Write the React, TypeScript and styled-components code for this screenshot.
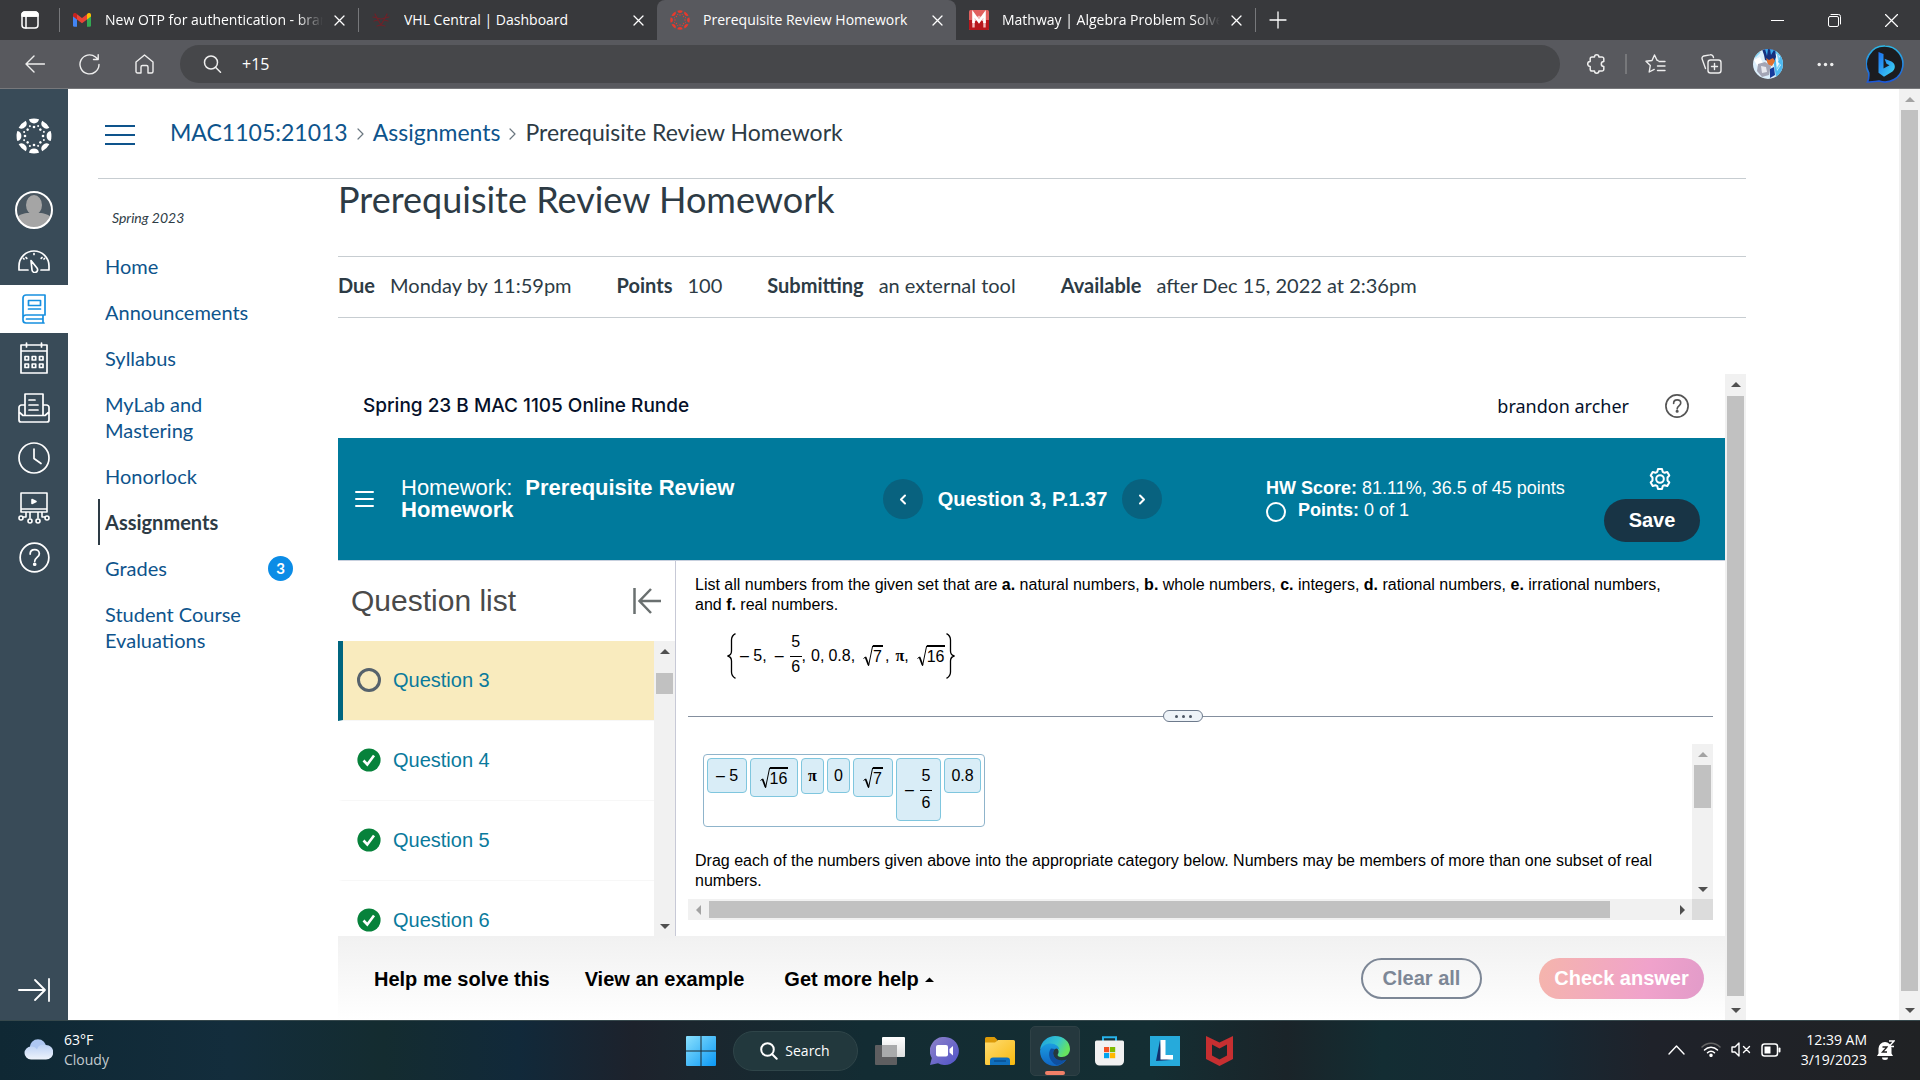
import React from 'react';
import styled, { createGlobalStyle, css } from 'styled-components';

const arial = '"Liberation Sans", Arial, sans-serif';
const segoe = '"Open Sans", "Segoe UI", sans-serif';
const lato = 'Lato, "Open Sans", sans-serif';

const GlobalStyle = createGlobalStyle`
  *, *::before, *::after { box-sizing: border-box; }
  body { margin: 0; background: #fff; font-family: ${lato}; color: #2d3b45; }
  button, input { font: inherit; color: inherit; }
  button { background: none; border: 0; padding: 0; cursor: pointer; }
  a { color: inherit; text-decoration: none; }
  h1, h2, p, ul, ol, dl, dd { margin: 0; padding: 0; font-weight: inherit; }
  ul, ol { list-style: none; }
  svg { display: block; flex: none; }
`;

const Screen = styled.div`
  display: flex;
  flex-direction: column;
  height: 100vh;
  overflow: hidden;
`;

/* ---------- Browser chrome ---------- */

const TabStrip = styled.div`
  display: flex;
  height: 40px;
  background: #38393c;
  color: #fff;
  font: 14px/20px ${segoe};
  flex: none;
`;
const IconCell = styled.button<{ $w: number }>`
  width: ${p => p.$w}px;
  display: flex;
  align-items: center;
  justify-content: center;
  flex: none;
`;
const Tab = styled.div<{ $active?: boolean; $line?: boolean }>`
  width: 299px;
  display: flex;
  align-items: center;
  padding: 0 11px 0 13px;
  position: relative;
  ${p => p.$active && css`
    background: #58595e;
    border-radius: 8px 8px 0 0;
  `}
  ${p => p.$line && css`
    &::before {
      content: '';
      position: absolute;
      left: 0;
      top: 8px;
      height: 24px;
      width: 1px;
      background: #77787b;
    }
  `}
`;
const Favicon = styled.span`
  width: 20px;
  margin-right: 13px;
  display: flex;
  justify-content: center;
  flex: none;
`;
const TabTitle = styled.span<{ $fade?: boolean }>`
  flex: 1;
  min-width: 0;
  margin-right: 8px;
  white-space: nowrap;
  overflow: hidden;
  ${p => p.$fade && css`mask-image: linear-gradient(to right, #000 88%, transparent);`}
`;
const Spacer = styled.div`flex: 1;`;
const NewTab = styled(IconCell)`
  position: relative;
  &::before {
    content: '';
    position: absolute;
    left: 0;
    top: 8px;
    height: 24px;
    width: 1px;
    background: #77787b;
  }
`;

const Toolbar = styled.div`
  display: flex;
  align-items: center;
  height: 49px;
  background: #58595e;
  border-bottom: 1px solid #77787b;
  color: #eee;
  padding: 0 4px 0 7px;
  flex: none;
`;
const AddressBar = styled.label`
  flex: 1;
  height: 38px;
  border-radius: 19px;
  background: #46474a;
  display: flex;
  align-items: center;
  padding-left: 23px;
  gap: 20px;
  margin: 0 8px;
`;
const AddressInput = styled.input`
  flex: 1;
  border: 0;
  outline: 0;
  padding: 0;
  background: transparent;
  color: #fff;
  font: 16px/24px ${segoe};
`;
const ToolSeparator = styled.span`
  width: 2px;
  height: 20px;
  background: #77787b;
`;

/* ---------- Scrollbars ---------- */

const Track = styled.div<{ $horizontal?: boolean }>`
  display: flex;
  flex: none;
  background: #f1f1f1;
  flex-direction: ${p => (p.$horizontal ? 'row' : 'column')};
  ${p => (p.$horizontal ? 'height: 21px;' : 'width: 21px;')}
  align-items: stretch;
`;
const ArrowCell = styled.span`
  width: 21px;
  height: 21px;
  display: flex;
  align-items: center;
  justify-content: center;
  flex: none;
`;
const Part = styled.span<{ $grow: number; $thumb?: boolean; $horizontal?: boolean }>`
  flex: ${p => p.$grow} 1 0;
  margin: ${p => (p.$horizontal ? '2px 0' : '0 2px')};
  background: ${p => (p.$thumb ? '#c1c1c1' : 'transparent')};
`;

function Arrow({ dir, dim }: { dir: 'up' | 'down' | 'left' | 'right'; dim?: boolean }) {
  const d = { up: 'M0 7 5 2l5 5z', down: 'M0 3l5 5 5-5z', left: 'M7 0 2 5l5 5z', right: 'M3 0l5 5-5 5z' }[dir];
  return (
    <ArrowCell>
      <svg width="10" height="10"><path d={d} fill={dim ? '#a3a3a3' : '#505050'} /></svg>
    </ArrowCell>
  );
}
function Scrollbar({ parts, horizontal, atStart }: { parts: [number, number, number]; horizontal?: boolean; atStart?: boolean }) {
  return (
    <Track $horizontal={horizontal} aria-hidden="true">
      <Arrow dir={horizontal ? 'left' : 'up'} dim={atStart} />
      <Part $grow={parts[0]} $horizontal={horizontal} />
      <Part $grow={parts[1]} $horizontal={horizontal} $thumb />
      <Part $grow={parts[2]} $horizontal={horizontal} />
      <Arrow dir={horizontal ? 'right' : 'down'} />
    </Track>
  );
}

/* ---------- Canvas page ---------- */

const Viewport = styled.div`
  display: flex;
  flex: 1;
  min-height: 0;
`;
const GlobalNav = styled.nav`
  width: 68px;
  flex: none;
  background: #394b58;
  color: #fff;
  display: flex;
  flex-direction: column;
`;
const NavItem = styled.a<{ $h: number; $active?: boolean }>`
  height: ${p => p.$h}px;
  display: flex;
  align-items: center;
  justify-content: center;
  ${p => p.$active && css`
    background: #fff;
    color: #1790e0;
  `}
`;
const Page = styled.div`
  flex: 1;
  min-width: 0;
  display: flex;
  flex-direction: column;
  padding: 0 153px 0 30px;
`;
const CrumbBar = styled.header`
  display: flex;
  align-items: center;
  height: 90px;
  border-bottom: 1px solid #c7cdd1;
  padding: 2px 0 0 7px;
  gap: 35px;
  flex: none;
`;
const Crumbs = styled.ol`
  display: flex;
  align-items: center;
  gap: 9px;
  font-size: 23px;
  line-height: 30px;
  li { display: flex; align-items: center; gap: 9px; padding-bottom: 6px; }
  a { color: #0e548c; }
  svg { color: #6b7780; margin-top: 4px; }
`;
const Columns = styled.div`
  display: flex;
  flex: 1;
  min-height: 0;
`;
const CourseNav = styled.nav`
  width: 240px;
  flex: none;
`;
const Term = styled.p`
  font-size: 14px;
  line-height: 20px;
  font-style: italic;
  padding: 29px 0 15px 14px;
`;
const CourseLink = styled.a<{ $active?: boolean }>`
  display: flex;
  align-items: center;
  justify-content: space-between;
  width: 195px;
  padding: 10px 0 10px 5px;
  border-left: 2px solid ${p => (p.$active ? '#2d3b45' : 'transparent')};
  font-size: 20px;
  line-height: 26px;
  color: ${p => (p.$active ? '#2d3b45' : '#0e548c')};
  font-weight: ${p => (p.$active ? 700 : 400)};
`;
const LinkText = styled.span`max-width: 150px;`;
const Badge = styled.span`
  width: 25px;
  height: 25px;
  border-radius: 50%;
  background: #0b8ce6;
  color: #fff;
  font-size: 15px;
  font-weight: 700;
  line-height: 24px;
  text-align: center;
`;
const Main = styled.main`
  flex: 1;
  min-width: 0;
  display: flex;
  flex-direction: column;
`;
const Title = styled.h1`
  font-size: 36px;
  line-height: 40px;
  padding-bottom: 37px;
  border-bottom: 1px solid #c7cdd1;
`;
const Details = styled.dl`
  display: flex;
  gap: 45px;
  padding: 13px 0 17px;
  border-bottom: 1px solid #c7cdd1;
  font-size: 20px;
  line-height: 30px;
  margin-bottom: 56px;
  div { display: flex; gap: 15px; }
  dt { font-weight: 700; }
`;

/* ---------- Homework frame ---------- */

const Frame = styled.section`
  display: flex;
  flex: 1;
  min-height: 0;
  font-family: ${arial};
  color: #000;
`;
const FrameBody = styled.div`
  flex: 1;
  min-width: 0;
  display: flex;
  flex-direction: column;
`;
const FrameHeader = styled.header`
  display: flex;
  align-items: center;
  height: 64px;
  padding: 0 36px 0 25px;
  color: #05112a;
  font: 18px/24px "Noto Sans", sans-serif;
  flex: none;
`;
const CourseName = styled.span`
  font: 500 19px/24px Inter, sans-serif;
  flex: 1;
`;
const HelpButton = styled.button`
  margin-left: 36px;
  color: #555;
`;
const BlueBar = styled.div`
  display: grid;
  grid-template-columns: 63px 482px 383px 291px 1fr;
  align-items: center;
  height: 123px;
  background: #007a9c;
  border-bottom: 1px solid #c7d0de;
  color: #fff;
  flex: none;
`;
const MenuButton = styled.button`
  padding-left: 17px;
  justify-self: start;
`;
const HomeworkName = styled.h2`
  font-size: 22px;
  line-height: 22px;
  width: 350px;
  b { margin-left: 7px; }
`;
const Stepper = styled.div`
  display: flex;
  align-items: center;
  justify-content: space-between;
  width: 279px;
  font-size: 20px;
  font-weight: 700;
`;
const RoundButton = styled.button`
  width: 40px;
  height: 40px;
  border-radius: 50%;
  background: #08627f;
  display: flex;
  align-items: center;
  justify-content: center;
`;
const Score = styled.div`
  font-size: 18px;
  line-height: 22px;
  white-space: nowrap;
`;
const PointsRow = styled.div`
  display: flex;
  gap: 12px;
  svg { margin-top: 3px; }
`;
const SaveColumn = styled.div`
  display: flex;
  flex-direction: column;
  align-items: flex-end;
  padding-right: 25px;
  gap: 9px;
  padding-top: 11px;
`;
const GearButton = styled.button`padding-right: 29px;`;
const SaveButton = styled.button`
  width: 96px;
  height: 43px;
  border-radius: 22px;
  background: #183445;
  font-size: 20px;
  font-weight: 700;
`;
const Workspace = styled.div`
  display: flex;
  flex: 1;
  min-height: 0;
`;
const QuestionPane = styled.aside`
  width: 338px;
  flex: none;
  display: flex;
  flex-direction: column;
  border-right: 1px solid #c7c9d6;
`;
const PaneHeader = styled.div`
  display: flex;
  align-items: center;
  justify-content: space-between;
  height: 80px;
  padding: 0 14px 0 13px;
  color: #4a4a4a;
  flex: none;
  h2 { font-size: 30px; }
`;
const ListArea = styled.div`
  display: flex;
  flex: 1;
  min-height: 0;
`;
const QuestionList = styled.ul`
  flex: 1;
  overflow: hidden;
`;
const QuestionRow = styled.li<{ $active?: boolean }>`
  height: 80px;
  border-left: 5px solid ${p => (p.$active ? '#00657f' : 'transparent')};
  background: ${p => (p.$active ? '#f9ebbe' : '#fff')};
  border-bottom: 1px solid #f7f7f7;
  a {
    display: flex;
    align-items: center;
    gap: 12px;
    height: 78px;
    padding-left: 14px;
    color: #0a7a9c;
    font-size: 20px;
  }
`;
const Problem = styled.div`
  flex: 1;
  min-width: 0;
  display: flex;
  flex-direction: column;
  padding: 14px 12px 16px;
  font-size: 16px;
  line-height: 20px;
`;
const ProblemText = styled.p`padding: 0 28px 0 7px;`;
const SetRow = styled.div`
  display: flex;
  align-items: center;
  height: 46px;
  margin: 18px 0 0 39px;
`;
const Elements = styled.div`
  display: flex;
  align-items: center;
  padding: 0 1px 0 4px;
`;
const Entry = styled.span<{ $gap: number }>`
  display: flex;
  align-items: center;
  margin-left: ${p => p.$gap}px;
  font-size: 16px;
  line-height: 20px;
`;
const FractionBox = styled.span<{ $roomy?: boolean }>`
  display: inline-flex;
  flex-direction: column;
  align-items: center;
  margin-left: 6px;
  span { width: 12px; height: 28px; line-height: 28px; text-align: center; }
  span + span { border-top: 1px solid #000; line-height: ${p => (p.$roomy ? 24 : 20)}px; }
`;
const RootBox = styled.span`
  display: inline-flex;
  align-items: flex-start;
  span { border-top: 2px solid #000; line-height: 20px; padding-right: 1px; }
`;
const Pi = styled.span`font-family: "Liberation Serif", serif; font-weight: 700;`;
const Divider = styled.div`
  display: flex;
  align-items: center;
  height: 12px;
  margin-top: 31px;
  &::before { content: ''; height: 1px; background: #848f9e; flex: 475; }
  &::after { content: ''; height: 1px; background: #848f9e; flex: 510; }
`;
const Grip = styled.button`
  width: 40px;
  height: 12px;
  border: 1px solid #6d7a8c;
  border-radius: 6px;
  background: #eef3f8;
  display: flex;
  align-items: center;
  justify-content: center;
  gap: 4px;
  i { width: 3px; height: 3px; border-radius: 50%; background: #4b5563; }
`;
const AnswerArea = styled.div`
  display: grid;
  grid-template-columns: 1fr 21px;
  grid-template-rows: 1fr 21px;
  flex: 1;
  min-height: 0;
  margin-top: 22px;
`;
const AnswerContent = styled.div`
  overflow: hidden;
  padding: 10px 0 0 7px;
`;
const Corner = styled.div`background: #dcdcdc;`;
const Tray = styled.div`
  display: flex;
  align-items: flex-start;
  gap: 3px;
  width: fit-content;
  margin: 0 0 24px 8px;
  padding: 3px;
  height: 73px;
  border: 1px solid #8fb4cb;
  border-radius: 4px;
`;
const Tile = styled.button<{ $w: number; $h: number }>`
  width: ${p => p.$w}px;
  height: ${p => p.$h}px;
  border: 1px solid #7fc6de;
  border-radius: 4px;
  background: #d9edf7;
  display: flex;
  align-items: center;
  justify-content: center;
`;
const FrameFooter = styled.footer`
  display: flex;
  align-items: center;
  height: 84px;
  padding: 0 21px 0 36px;
  gap: 35px;
  background: linear-gradient(#f1f1f1, #fff);
  font-size: 20px;
  font-weight: 700;
  flex: none;
`;
const HelpLink = styled.button<{ $wide?: boolean }>`
  font-weight: 700;
  display: flex;
  align-items: center;
  gap: 6px;
  padding-top: 3px;
  margin-left: ${p => (p.$wide ? 5 : 0)}px;
`;
const ClearButton = styled.button`
  width: 121px;
  height: 41px;
  border: 2px solid #7d8796;
  border-radius: 21px;
  color: #7d8796;
  font-weight: 700;
  margin-right: 22px;
`;
const CheckButton = styled.button`
  width: 165px;
  height: 41px;
  border-radius: 21px;
  background: linear-gradient(100deg, #f5b5ac, #f0a2cb 65%, #e29bc9);
  color: #fff;
  font-weight: 700;
`;

/* ---------- Windows taskbar ---------- */

const Taskbar = styled.footer`
  display: grid;
  grid-template-columns: 1fr auto 1fr;
  align-items: center;
  height: 60px;
  flex: none;
  border-top: 1px solid #36484c;
  background: linear-gradient(90deg, #0f2834, #132d3c 12%, #142c30 20%, #11293a 27%, #1d222c 33%, #1b262e 36%, #132c33 45%, #142e33 60%, #1a2429 67%, #132d33 72%, #162934 80%, #1f222a 86%, #202224);
  color: #fff;
  font: 14px/20px ${segoe};
`;
const Weather = styled.button`
  display: flex;
  align-items: center;
  gap: 11px;
  padding: 0 0 2px 24px;
  text-align: left;
  justify-self: start;
  span span { display: block; color: #c3cace; }
`;
const AppRow = styled.div`
  display: flex;
  align-items: center;
  gap: 5px;
`;
const AppButton = styled.button<{ $running?: boolean }>`
  width: 50px;
  height: 50px;
  border-radius: 5px;
  display: flex;
  align-items: center;
  justify-content: center;
  position: relative;
  ${p => p.$running && css`
    background: #25383e;
    border: 1px solid #2f4146;
    &::after {
      content: '';
      position: absolute;
      bottom: 0;
      left: 14px;
      width: 20px;
      height: 4px;
      border-radius: 2px;
      background: #f08068;
    }
  `}
`;
const SearchPill = styled.button`
  width: 125px;
  height: 40px;
  border-radius: 20px;
  border: 1px solid #2f4549;
  background: #22383d;
  display: flex;
  align-items: center;
  justify-content: center;
  gap: 7px;
  margin: 0 2px;
`;
const TrayArea = styled.div`
  display: flex;
  align-items: center;
  justify-content: flex-end;
  padding: 0 25px 2px 0;
  gap: 10px;
`;
const ShowHidden = styled.button`margin-right: 6px;`;
const Clock = styled.div`
  text-align: right;
  margin-left: 10px;
`;

/* ---------- Icons ---------- */

const line = { fill: 'none', stroke: 'currentColor', strokeLinecap: 'round', strokeLinejoin: 'round' } as const;

function CanvasMark({ size, color }: { size: number; color: string }) {
  return (
    <svg width={size} height={size} viewBox="-18 -18 36 36" fill={color}>
      {[0, 45, 90, 135, 180, 225, 270, 315].map(a => (
        <g key={a} transform={`rotate(${a})`}>
          <path d="M-5 -16.7a17.5 17.5 0 0 1 10 0a5.1 5.1 0 0 1-10 0z" />
          <circle cx="0" cy="-9" r="1.3" />
          <circle cx="4.1" cy="-9.9" r="1" />
        </g>
      ))}
    </svg>
  );
}
const CloseX = () => (
  <svg width="11" height="11" viewBox="0 0 11 11" {...line} strokeWidth="1.3"><path d="M1 1l9 9M10 1l-9 9" /></svg>
);
const GmailIcon = () => (
  <svg width="18" height="14" viewBox="0 0 18 14">
    <path d="M0 2v10.500a1.300 1.300 0 0 0 1.300 1.300H4V6z" fill="#4285f4" />
    <path d="M18 2v10.500a1.300 1.300 0 0 1-1.300 1.300H14V6z" fill="#34a853" />
    <path d="M14 1.200V6.500l4-3V1.900C18 .1 16-.6 14.600.5z" fill="#fbbc04" />
    <path d="M0 3.500l4 3V1.200L3.400.5C2-.6 0 .1 0 1.900z" fill="#c5221f" />
    <path d="M4 1.200l5 3.800 5-3.800v5.300L9 10.300 4 6.500z" fill="#ea4335" />
  </svg>
);
const VhlIcon = () => (
  <svg width="18" height="14" viewBox="0 0 18 14" {...line} stroke="#6e2229" strokeWidth="1.200">
    <path d="M1 4l4 1 4 1 4-1 4-1M5 5l4 7 4-7M2 8l4-1M16 8l-4-1M5 5L3 1M13 5l2-4M9 12l-4 1M9 12l4 1" />
  </svg>
);
const MathwayIcon = () => (
  <svg width="20" height="20" viewBox="0 0 20 20">
    <rect width="20" height="20" rx="1.500" fill="#e0605f" />
    <path d="M0 10h20v8.500a1.500 1.500 0 0 1-1.500 1.500h-17A1.500 1.500 0 0 1 0 18.500z" fill="#b8161c" />
    <path d="M4.500 17.500V11l5.500-4 5.500 4v6.500" fill="none" stroke="#f3b9ba" strokeWidth="2.400" />
    <path d="M4.500 13V4l5.500 7.500L15.500 4v9" fill="none" stroke="#fff" strokeWidth="2.600" />
  </svg>
);
const BingIcon = () => (
  <svg width="38" height="38" viewBox="0 0 38 38">
    <defs>
      <linearGradient id="bingRing" x1="0" y1="0" x2="0" y2="1"><stop offset="0" stopColor="#2cb8e6" /><stop offset="1" stopColor="#1b57d8" /></linearGradient>
      <linearGradient id="bingB" x1="0" y1="0" x2="1" y2="1"><stop offset="0" stopColor="#1b6ff0" /><stop offset="1" stopColor="#40d9f2" /></linearGradient>
    </defs>
    <path d="M19 1a18 18 0 1 1-6 35c-4 .5-8 1-11.500 1 1.800-3 1.300-6 1.300-9A18 18 0 0 1 19 1z" fill="#1b1c20" stroke="url(#bingRing)" strokeWidth="1.600" />
    <path d="M12.500 7l5 2v14.500l6-3.300-3-1.500-2-5 7 2.800c4 2 4.500 7 1 10l-8.500 5.200-5.500-4z" fill="url(#bingB)" />
  </svg>
);
const ProfilePic = () => (
  <svg width="30" height="30" viewBox="0 0 30 30">
    <defs><clipPath id="profileClip"><circle cx="15" cy="15" r="15" /></clipPath></defs>
    <g clipPath="url(#profileClip)">
      <rect width="30" height="30" fill="#dbeefb" />
      <path d="M21 0l9 4v20l-7 4-2-12z" fill="#4db9f0" />
      <path d="M22 4l5 3-2 6 3 3-4 6z" fill="#e9f7ff" />
      <path d="M9 0l2 6 1 5 3 1 5 3 3-7-1-8z" fill="#16307e" />
      <path d="M12 0l2 7 1-7zM17 0l1 6 3-5z" fill="#3aa9ec" />
      <path d="M13 9l3 2 4-2 2 3-3 5-4-1z" fill="#e0702f" />
      <path d="M1 11l6-3 4 8-5 4z" fill="#fff" />
      <path d="M5 15l7-2 6 4-2 9-7 2-5-6z" fill="#a3a5b5" />
      <path d="M8 17l5 1 1 5-5 1z" fill="#e8e9ef" />
      <path d="M17 20l4-2 1 8-5 3z" fill="#163a9a" />
      <path d="M2 8l5-5M24 3l2 8M24 20l3-5" stroke="#7fd4f7" strokeWidth="1.500" />
    </g>
  </svg>
);
const QuestionMark = ({ size, w }: { size: number; w: number }) => (
  <svg width={size} height={size} viewBox="0 0 32 32" {...line} strokeWidth={w}>
    <circle cx="16" cy="16" r="14.800" />
    <path d="M11.500 12.500c0-6.500 9.500-6 9.500-.5 0 4-4.800 3.800-4.800 8" />
    <circle cx="16.200" cy="23" r="1" fill="currentColor" />
  </svg>
);
const CheckMark = () => (
  <svg width="24" height="24" viewBox="0 0 24 24">
    <circle cx="12" cy="12" r="11.600" fill="#07823b" />
    <path d="M6.500 12.500l3.800 4 6.700-9" fill="none" stroke="#fff" strokeWidth="2.600" />
  </svg>
);
const Ring = ({ size, color, w }: { size: number; color: string; w: number }) => (
  <svg width={size} height={size}><circle cx={size / 2} cy={size / 2} r={size / 2 - w / 2} fill="none" stroke={color} strokeWidth={w} /></svg>
);
const Radical = () => (
  <svg width="10" height="22" viewBox="0 0 10 22" fill="none" stroke="#000"><path d="M.5 13.500l2-1.500" /><path d="M2.500 12l3 8" strokeWidth="1.800" /><path d="M5.500 21L9.600 1H10" /></svg>
);
const Brace = ({ flip }: { flip?: boolean }) => (
  <svg width="9" height="46" viewBox="0 0 9 46" fill="none" stroke="#000" strokeWidth="1.300">
    <path transform={flip ? 'matrix(-1 0 0 1 9 0)' : undefined} d="M8.500.7C6 2 4.500 4 4.500 7v11c0 3-1.500 4.500-4 5 2.500.5 4 2 4 5v11c0 3 1.500 5 4 6.300" />
  </svg>
);
const Root = ({ children }: { children: string }) => (
  <RootBox><Radical /><span>{children}</span></RootBox>
);
const Fraction = ({ roomy }: { roomy?: boolean }) => (
  <FractionBox $roomy={roomy}><span>5</span><span>6</span></FractionBox>
);

const navIcons: { label: string; h: number; active?: boolean; icon: React.ReactNode }[] = [
  { label: 'Dashboard', h: 48, icon: (
    <svg width="32" height="24" viewBox="0 0 32 24" {...line} strokeWidth="1.700">
      <path d="M10 21H1v-4a15 15 0 0 1 30 0v4h-8M13 11.500l6 7.500a2.800 2.800 0 1 1-5 2zM16 4.500v1M8 8.500l.8.800M24 8.500l-.8.800M5.500 9.500l.5.500M26.500 9.500l-.5.500" />
    </svg>) },
  { label: 'Courses', h: 48, active: true, icon: (
    <svg width="24" height="30" viewBox="0 0 24 30" {...line} strokeWidth="1.700">
      <path d="M23 21V1H4a3 3 0 0 0-3 3v22a3 3 0 0 0 3 3h18M23 21H4a3 3 0 0 0-3 3M21 21.500V29M4.500 25H20M6.500 6.500h12v5h-12zM6.500 15h12" />
    </svg>) },
  { label: 'Calendar', h: 50, icon: (
    <svg width="28" height="32" viewBox="0 0 28 32" {...line} strokeWidth="1.700">
      <path d="M1 3h26v28H1zM1 9h26M6.500 1v4M21.500 1v4M5 14.500h3.500V18H5zM12.200 14.500h3.500V18h-3.500zM19.500 14.500H23V18h-3.500zM5 22h3.500v3.500H5zM12.200 22h3.500v3.500h-3.500zM19.500 22H23v3.500h-3.500z" />
    </svg>) },
  { label: 'Inbox', h: 50, icon: (
    <svg width="32" height="30" viewBox="0 0 32 30" {...line} strokeWidth="1.700">
      <path d="M7 22.500V1h18v21.500M7 12H3.500A2.500 2.500 0 0 0 1 14.500V27a2 2 0 0 0 2 2h26a2 2 0 0 0 2-2V14.500a2.500 2.500 0 0 0-2.500-2.500H25M1 19l4 3.500h22l4-3.500M11 7h6M11 12h9M11 17h9" />
    </svg>) },
  { label: 'History', h: 50, icon: (
    <svg width="32" height="32" viewBox="0 0 32 32" {...line} strokeWidth="1.700"><circle cx="16" cy="16" r="15" /><path d="M16 7v9.500l7 5" /></svg>) },
  { label: 'Studio', h: 50, icon: (
    <svg width="32" height="32" viewBox="0 0 32 32" {...line} strokeWidth="1.600">
      <path d="M3 1h26v19H3zM3 17h26M8 20v5H5M12 20v6M20 20v6M24 20v5h3" /><path d="M14 7.500v4l4-2z" fill="currentColor" />
      <circle cx="3" cy="26" r="2" /><circle cx="12" cy="29" r="2" /><circle cx="20" cy="29" r="2" /><circle cx="29" cy="26" r="2" />
    </svg>) },
  { label: 'Help', h: 48, icon: <QuestionMark size={31} w={1.8} /> },
];

const courseLinks = ['Home', 'Announcements', 'Syllabus', 'MyLab and Mastering', 'Honorlock', 'Assignments', 'Grades', 'Student Course Evaluations'];

const Chevron = () => (
  <svg width="7" height="12" viewBox="0 0 7 12" {...line} strokeWidth="1.200"><path d="M1 1l5 5-5 5" /></svg>
);

function BrowserChrome() {
  return (
    <>
      <TabStrip>
        <IconCell $w={59} aria-label="Tab actions">
          <svg width="18" height="18" viewBox="0 0 18 18" {...line} strokeWidth="1.500"><rect x="1" y="1" width="16" height="16" rx="3" /><path d="M1 3.500a2.500 2.500 0 0 1 2.500-2.500h11A2.500 2.500 0 0 1 17 3.500V5H1zM5 5v12" fill="none" /><path d="M2 2h14v3H2z" fill="currentColor" /></svg>
        </IconCell>
        <Tab $line><Favicon><GmailIcon /></Favicon><TabTitle $fade>New OTP for authentication - brandon</TabTitle><IconCell $w={16} aria-label="Close tab"><CloseX /></IconCell></Tab>
        <Tab $line><Favicon><VhlIcon /></Favicon><TabTitle>VHL Central | Dashboard</TabTitle><IconCell $w={16} aria-label="Close tab"><CloseX /></IconCell></Tab>
        <Tab $active><Favicon><CanvasMark size={20} color="#e8392c" /></Favicon><TabTitle>Prerequisite Review Homework</TabTitle><IconCell $w={16} aria-label="Close tab"><CloseX /></IconCell></Tab>
        <Tab><Favicon><MathwayIcon /></Favicon><TabTitle $fade>Mathway | Algebra Problem Solver</TabTitle><IconCell $w={16} aria-label="Close tab"><CloseX /></IconCell></Tab>
        <NewTab $w={46} aria-label="New tab"><svg width="18" height="18" {...line} strokeWidth="1.300"><path d="M9 1v16M1 9h16" /></svg></NewTab>
        <Spacer />
        <IconCell $w={57} aria-label="Minimize"><svg width="13" height="13" {...line}><path d="M0 6.500h13" /></svg></IconCell>
        <IconCell $w={57} aria-label="Restore"><svg width="13" height="13" {...line}><rect x=".5" y="2.500" width="10" height="10" rx="1.500" /><path d="M3 .5h7.500a2 2 0 0 1 2 2V10" /></svg></IconCell>
        <IconCell $w={57} aria-label="Close"><svg width="13" height="13" {...line} strokeWidth="1.200"><path d="M.5.5l12 12M12.500.5l-12 12" /></svg></IconCell>
      </TabStrip>
      <Toolbar>
        <IconCell $w={55} aria-label="Back"><svg width="20" height="18" viewBox="0 0 20 18" {...line} strokeWidth="1.400"><path d="M19.500 9H1M9 1L1 9l8 8" /></svg></IconCell>
        <IconCell $w={55} aria-label="Refresh"><svg width="21" height="21" viewBox="0 0 21 21" {...line} strokeWidth="1.400"><path d="M20 10.500A9.500 9.500 0 1 1 16.500 3l2.500 2.300M19.200.8v4.700h-4.700" /></svg></IconCell>
        <IconCell $w={55} aria-label="Home"><svg width="19" height="20" viewBox="0 0 19 20" {...line} strokeWidth="1.400"><path d="M1 8l8.500-7L18 8v9.500a1.500 1.500 0 0 1-1.500 1.500H13v-6a1.500 1.500 0 0 0-1.500-1.500h-4A1.500 1.500 0 0 0 6 13v6H2.500A1.500 1.500 0 0 1 1 17.500z" /></svg></IconCell>
        <AddressBar>
          <svg width="19" height="18" viewBox="0 0 19 18" {...line} strokeWidth="1.500"><circle cx="8" cy="7.500" r="6.500" /><path d="M12.500 12.200l5 5" /></svg>
          <AddressInput aria-label="Address and search bar" defaultValue="+15" />
        </AddressBar>
        <IconCell $w={57} aria-label="Extensions"><svg width="20" height="20" viewBox="0 0 20 20" {...line} strokeWidth="1.500"><path d="M7.500 3a2.200 2.200 0 0 1 4.400 0H15a1.800 1.800 0 0 1 1.800 1.800v2.700a2.500 2.500 0 1 0 0 5v2.700A1.800 1.800 0 0 1 15 17h-3.100a2.200 2.200 0 0 1-4.400 0H5a1.800 1.800 0 0 1-1.800-1.800v-2.700a2.500 2.500 0 0 1 0-5V4.800A1.800 1.800 0 0 1 5 3z" /></svg></IconCell>
        <ToolSeparator />
        <IconCell $w={57} aria-label="Favorites"><svg width="21" height="20" viewBox="0 0 21 20" {...line} strokeWidth="1.400"><path d="M13 6.500l-1-.2L9.500 1 7 6.500l-6 .8 4.300 4.200L4.200 18l5-2.600M14 7.500h6M12.500 12h7.500M12.500 16.500h7.500" /></svg></IconCell>
        <IconCell $w={55} aria-label="Collections"><svg width="21" height="20" viewBox="0 0 21 20" {...line} strokeWidth="1.400"><rect x="7" y="6" width="13" height="13" rx="2.500" /><path d="M13.500 9.500v6M10.500 12.500h6M4.500 14.500L1.200 5.300A2.500 2.500 0 0 1 2.700 2L9 .9a2.500 2.500 0 0 1 3.200 1.600l.3 1" /></svg></IconCell>
        <IconCell $w={58} aria-label="Profile"><ProfilePic /></IconCell>
        <IconCell $w={57} aria-label="Settings and more"><svg width="17" height="5" fill="currentColor"><circle cx="2.200" cy="2.500" r="1.700" /><circle cx="8.500" cy="2.500" r="1.700" /><circle cx="14.800" cy="2.500" r="1.700" /></svg></IconCell>
        <IconCell $w={62} aria-label="Bing"><BingIcon /></IconCell>
      </Toolbar>
    </>
  );
}

function HomeworkFrame() {
  return (
    <Frame>
      <FrameBody>
        <FrameHeader>
          <CourseName>Spring 23 B MAC 1105 Online Runde</CourseName>
          <span>brandon archer</span>
          <HelpButton aria-label="Help"><QuestionMark size={24} w={2.2} /></HelpButton>
        </FrameHeader>
        <BlueBar>
          <MenuButton aria-label="Menu"><svg width="19" height="18" {...line} strokeWidth="2"><path d="M1 2h17M1 9h17M1 16h17" /></svg></MenuButton>
          <HomeworkName>Homework: <b>Prerequisite Review Homework</b></HomeworkName>
          <Stepper>
            <RoundButton aria-label="Previous question"><svg width="8" height="11" viewBox="0 0 8 11" {...line} strokeWidth="2"><path d="M6 1.500l-4 4 4 4" /></svg></RoundButton>
            <span>Question 3, P.1.37</span>
            <RoundButton aria-label="Next question"><svg width="8" height="11" viewBox="0 0 8 11" {...line} strokeWidth="2"><path d="M2 1.500l4 4-4 4" /></svg></RoundButton>
          </Stepper>
          <Score>
            <div><b>HW Score:</b> 81.11%, 36.5 of 45 points</div>
            <PointsRow><Ring size={20} color="#fff" w={2} /><span><b>Points:</b> 0 of 1</span></PointsRow>
          </Score>
          <SaveColumn>
            <GearButton aria-label="Settings">
              <svg width="22" height="22" viewBox="0 0 22 22" {...line} strokeWidth="2">
                <path d="M9 1h4l.7 2.800 1.800 1 2.800-.8 2 3.500L18.500 9.500v3l1.800 2-2 3.500-2.800-.8-1.800 1L13 21H9l-.7-2.800-1.800-1-2.800.8-2-3.500 1.800-2v-3L1.700 7.500l2-3.500 2.800.8 1.800-1z" /><circle cx="11" cy="11" r="3.800" />
              </svg>
            </GearButton>
            <SaveButton>Save</SaveButton>
          </SaveColumn>
        </BlueBar>
        <Workspace>
          <QuestionPane>
            <PaneHeader>
              <h2>Question list</h2>
              <button aria-label="Collapse question list"><svg width="28" height="26" viewBox="0 0 28 26" fill="none" stroke="#6a7070" strokeWidth="2.500"><path d="M1.500 0v26M28 13H7M18 1L6.500 13 18 25" /></svg></button>
            </PaneHeader>
            <ListArea>
              <QuestionList>
                {[3, 4, 5, 6].map(n => (
                  <QuestionRow key={n} $active={n === 3}>
                    <a href={`#question-${n}`}>{n === 3 ? <Ring size={24} color="#56626c" w={3} /> : <CheckMark />}Question {n}</a>
                  </QuestionRow>
                ))}
              </QuestionList>
              <Scrollbar parts={[11, 21, 221]} />
            </ListArea>
          </QuestionPane>
          <Problem>
            <ProblemText>
              List all numbers from the given set that are <b>a.</b> natural numbers, <b>b.</b> whole numbers, <b>c.</b> integers, <b>d.</b> rational numbers, <b>e.</b> irrational numbers, and <b>f.</b> real numbers.
            </ProblemText>
            <SetRow>
              <Brace />
              <Elements>
                <Entry $gap={0}>– 5,</Entry>
                <Entry $gap={8}>–<Fraction />,</Entry>
                <Entry $gap={5}>0,</Entry>
                <Entry $gap={4}>0.8,</Entry>
                <Entry $gap={8}><Root>7</Root></Entry>
                <Entry $gap={2}>,</Entry>
                <Entry $gap={6}><Pi>π</Pi>,</Entry>
                <Entry $gap={8}><Root>16</Root></Entry>
              </Elements>
              <Brace flip />
            </SetRow>
            <Divider><Grip aria-label="Resize panes"><i /><i /><i /></Grip></Divider>
            <AnswerArea>
              <AnswerContent>
                <Tray>
                  <Tile $w={40} $h={35}>– 5</Tile>
                  <Tile $w={48} $h={39}><Root>16</Root></Tile>
                  <Tile $w={23} $h={36}><Pi>π</Pi></Tile>
                  <Tile $w={23} $h={35}>0</Tile>
                  <Tile $w={40} $h={39}><Root>7</Root></Tile>
                  <Tile $w={45} $h={63}>–<Fraction roomy /></Tile>
                  <Tile $w={37} $h={35}>0.8</Tile>
                </Tray>
                <p>Drag each of the numbers given above into the appropriate category below. Numbers may be members of more than one subset of real numbers.</p>
              </AnswerContent>
              <Scrollbar parts={[0, 43, 70]} atStart />
              <Scrollbar parts={[0, 901, 61]} horizontal atStart />
              <Corner />
            </AnswerArea>
          </Problem>
        </Workspace>
        <FrameFooter>
          <HelpLink>Help me solve this</HelpLink>
          <HelpLink>View an example</HelpLink>
          <HelpLink $wide>Get more help <svg width="9" height="5"><path d="M0 5l4.500-4.500L9 5z" /></svg></HelpLink>
          <Spacer />
          <ClearButton>Clear all</ClearButton>
          <CheckButton>Check answer</CheckButton>
        </FrameFooter>
      </FrameBody>
      <Scrollbar parts={[1, 600, 3]} />
    </Frame>
  );
}

function WindowsTaskbar() {
  return (
    <Taskbar>
      <Weather>
        <svg width="29" height="21" viewBox="0 0 29 21">
          <defs><linearGradient id="cloud" x1="0" y1="0" x2="0" y2="1"><stop offset="0" stopColor="#b9d0f5" /><stop offset="1" stopColor="#eef3fb" /></linearGradient></defs>
          <circle cx="14" cy="8.500" r="8.300" fill="#aec7f2" />
          <path d="M7 7.500a6.500 6.500 0 0 1 6 3 6.500 6.500 0 0 1 9-4.500 7 7 0 0 1 0 14.500H7A6.500 6.500 0 0 1 7 7.500z" fill="url(#cloud)" />
        </svg>
        <span>63°F<span>Cloudy</span></span>
      </Weather>
      <AppRow>
        <AppButton aria-label="Start">
          <svg width="30" height="30" viewBox="0 0 30 30">
            <defs><linearGradient id="win" x1="0" y1="0" x2="1" y2="1"><stop offset="0" stopColor="#8ae0fd" /><stop offset="1" stopColor="#0a98f5" /></linearGradient></defs>
            <path d="M0 1a1 1 0 0 1 1-1h13.500v14.500H0zM15.500 0H29a1 1 0 0 1 1 1v13.500H15.500zM0 15.500h14.500V30H1a1 1 0 0 1-1-1zM15.500 15.500H30V29a1 1 0 0 1-1 1H15.500z" fill="url(#win)" />
          </svg>
        </AppButton>
        <SearchPill>
          <svg width="18" height="18" viewBox="0 0 18 18" {...line} strokeWidth="2"><circle cx="7.500" cy="7.500" r="6.300" /><path d="M12.200 12.200l4.500 4.500" /></svg>
          Search
        </SearchPill>
        <AppButton aria-label="Task view">
          <svg width="30" height="28" viewBox="0 0 30 28"><defs><linearGradient id="tv" x1="0" y1="0" x2="0" y2="1"><stop offset="0" stopColor="#fff" /><stop offset="1" stopColor="#dedede" /></linearGradient></defs><rect x="0" y="8" width="22" height="20" rx="1" fill="#5e5e60" /><rect x="7" y="0" width="23" height="20" rx="1" fill="url(#tv)" /><rect x="7" y="8" width="15" height="12" fill="#a9aaab" /></svg>
        </AppButton>
        <AppButton aria-label="Chat">
          <svg width="29" height="28" viewBox="0 0 29 28"><defs><linearGradient id="chat" x1="0" y1="0" x2="1" y2="1"><stop offset="0" stopColor="#8f83c9" /><stop offset="1" stopColor="#4f52c8" /></linearGradient></defs><path d="M15 0a14 14 0 1 1-7 26.200L0 28l1.800-7A14 14 0 0 1 15 0z" fill="url(#chat)" /><rect x="6" y="8" width="12" height="11.500" rx="2" fill="#fff" /><path d="M19.500 12l3.500-3v9.500l-3.500-3z" fill="#fff" /></svg>
        </AppButton>
        <AppButton aria-label="File Explorer">
          <svg width="30" height="30" viewBox="0 -3 30 30"><defs><linearGradient id="fold" x1="0" y1="0" x2="1" y2="1"><stop offset="0" stopColor="#ffdc72" /><stop offset="1" stopColor="#f8b90e" /></linearGradient></defs><path d="M0-.5A1.500 1.500 0 0 1 1.500-2h8l3 3-2.500 5H0z" fill="#dc9a08" /><path d="M0 3.500h10L13 1h15.500A1.500 1.500 0 0 1 30 2.500v22a1.500 1.500 0 0 1-1.500 1.500h-27A1.500 1.500 0 0 1 0 24.500z" fill="url(#fold)" /><path d="M5 26v-4.500a3 3 0 0 1 3-3h14a3 3 0 0 1 3 3V26z" fill="#0f6fbe" /><path d="M9 22h12" stroke="#0a4f91" strokeWidth="1.500" /></svg>
        </AppButton>
        <AppButton $running aria-label="Microsoft Edge">
          <svg width="30" height="30" viewBox="0 0 30 30">
            <defs>
              <linearGradient id="edgeTop" x1="0" y1="0" x2="1" y2=".4"><stop offset="0" stopColor="#1c9fdf" /><stop offset=".6" stopColor="#35c5cf" /><stop offset="1" stopColor="#66e35f" /></linearGradient>
              <linearGradient id="edgeLow" x1="0" y1="0" x2="0" y2="1"><stop offset="0" stopColor="#1b9de0" /><stop offset="1" stopColor="#1065c4" /></linearGradient>
            </defs>
            <path d="M0 14C1 5 8 0 15 0c9 0 15 6 15 13 0 5-4 8-8 8-4 0-5-1.500-4-3 1.500-2 .500-7-5-8C8 9 2 11 0 14z" fill="url(#edgeTop)" />
            <path d="M0 15C1 10 6 7.500 10.500 7.500c5 0 9 3 9 7 0-3-6.500-3-6.500 2.500 0 6 6 10 13 7C23 28 19 30 15 30 7 30 0 24 0 15z" fill="url(#edgeLow)" />
            <path d="M11 12.500c-4 5-1.500 13.500 5.500 16.500 4-.2 8-2.500 10.500-6-5 3-12 1-13.500-4-.7-2.500 0-5 1.500-6z" fill="#0f4fa0" />
          </svg>
        </AppButton>
        <AppButton aria-label="Microsoft Store">
          <svg width="29" height="30" viewBox="0 0 29 30"><path d="M8 6V1.200h13V6" fill="none" stroke="#27b2ea" strokeWidth="2" /><path d="M0 6a1.500 1.500 0 0 1 1.500-1.500h26A1.500 1.500 0 0 1 29 6v19a4.500 4.500 0 0 1-4.500 4.500h-20A4.500 4.500 0 0 1 0 25z" fill="#f1f1f1" /><path d="M9 11h5.200v5.200H9z" fill="#f25022" /><path d="M15 11h5.200v5.200H15z" fill="#7fba00" /><path d="M9 17h5.200v5.200H9z" fill="#00a4ef" /><path d="M15 17h5.200v5.200H15z" fill="#ffb900" /></svg>
        </AppButton>
        <AppButton aria-label="L app">
          <svg width="30" height="30" viewBox="0 0 30 30"><path d="M0 0h30v30H0z" fill="#26aadb" /><path d="M10 4L6 25l15-1-9-2z" fill="#12306a" /><path d="M10.500 4h5v15H23v4.500H10.500z" fill="#fff" /></svg>
        </AppButton>
        <AppButton aria-label="McAfee">
          <svg width="27" height="30" viewBox="0 0 27 30"><path d="M0 0l13.500 6.500L27 0v23l-13.500 7L0 23zM6 8.500v11l7.500 4 7.500-4v-11L13.500 12.500z" fill="#c62f31" fillRule="evenodd" /></svg>
        </AppButton>
      </AppRow>
      <TrayArea>
        <ShowHidden aria-label="Show hidden icons"><svg width="17" height="10" viewBox="0 0 17 10" {...line} strokeWidth="1.400"><path d="M1 9l7.500-8L16 9" /></svg></ShowHidden>
        <svg width="20" height="15" viewBox="0 0 20 15" {...line} strokeWidth="1.500"><path d="M1 5a12.500 12.500 0 0 1 18 0" stroke="#666" /><path d="M3.500 8a9 9 0 0 1 13 0M6.500 10.800a5 5 0 0 1 7 0" /><circle cx="10" cy="13.300" r="1" fill="currentColor" /></svg>
        <svg width="20" height="15" viewBox="0 0 20 15" {...line} strokeWidth="1.400"><path d="M1 5h3l4-4v13l-4-4H1zM12.500 4.500l6 6M18.500 4.500l-6 6" /></svg>
        <svg width="20" height="14" viewBox="0 0 20 14" {...line} strokeWidth="1.500"><rect x="1" y="1" width="15.500" height="12" rx="2.500" /><path d="M18.500 5.500v3" strokeWidth="2" /><path d="M3.500 3.500h6v7h-6z" fill="currentColor" stroke="none" /></svg>
        <Clock>12:39 AM<br />3/19/2023</Clock>
        <svg width="18" height="20" viewBox="0 0 18 20"><path d="M8 2a6.500 6.500 0 0 1 6.500 6.500v5l1.500 2.500H0l1.500-2.500v-5A6.500 6.500 0 0 1 8 2zM5 17.500h6a3 2.500 0 0 1-6 0z" fill="#fff" /><path d="M5.500 7h4.500l-4.500 5H10" fill="none" stroke="#222" strokeWidth="1.400" /><path d="M12 1h5l-5 5.500h5" fill="none" stroke="#fff" strokeWidth="1.400" /></svg>
      </TrayArea>
    </Taskbar>
  );
}

export default function App() {
  return (
    <Screen>
      <GlobalStyle />
      <BrowserChrome />
      <Viewport>
        <GlobalNav aria-label="Global navigation">
          <NavItem href="#home" $h={94} aria-label="Canvas home"><CanvasMark size={36} color="#fff" /></NavItem>
          <NavItem href="#account" $h={54} aria-label="Account">
            <svg width="38" height="38" viewBox="0 0 38 38">
              <defs><clipPath id="avatarClip"><circle cx="19" cy="19" r="18" /></clipPath></defs>
              <circle cx="19" cy="19" r="18" fill="#4a5761" />
              <g clipPath="url(#avatarClip)" fill="#a5a5a5"><ellipse cx="19" cy="14" rx="8" ry="10" /><path d="M12 22h14c6 1 11 3 12 8v8H0v-8c1-5 6-7 12-8z" /></g>
              <circle cx="19" cy="19" r="18" fill="none" stroke="#fff" strokeWidth="2" />
            </svg>
          </NavItem>
          {navIcons.map(n => (
            <NavItem key={n.label} href={`#${n.label}`} $h={n.h} $active={n.active} aria-label={n.label}>{n.icon}</NavItem>
          ))}
          <Spacer />
          <NavItem as="button" $h={60} aria-label="Expand navigation">
            <svg width="32" height="24" viewBox="0 0 32 24" {...line} strokeWidth="1.800"><path d="M1 12h26M17 2l10 10-10 10M31 1v22" /></svg>
          </NavItem>
        </GlobalNav>
        <Page>
          <CrumbBar>
            <button aria-label="Toggle course navigation"><svg width="30" height="22" stroke="#0e548c" strokeWidth="2"><path d="M0 2h30M0 11h30M0 20h30" /></svg></button>
            <Crumbs>
              <li><a href="#course">MAC1105:21013</a></li>
              <li><Chevron /><a href="#assignments">Assignments</a></li>
              <li><Chevron />Prerequisite Review Homework</li>
            </Crumbs>
          </CrumbBar>
          <Columns>
            <CourseNav aria-label="Course navigation">
              <Term>Spring 2023</Term>
              <ul>
                {courseLinks.map(l => (
                  <li key={l}>
                    <CourseLink href={`#${l}`} $active={l === 'Assignments'}>
                      <LinkText>{l}</LinkText>
                      {l === 'Grades' && <Badge>3</Badge>}
                    </CourseLink>
                  </li>
                ))}
              </ul>
            </CourseNav>
            <Main>
              <Title>Prerequisite Review Homework</Title>
              <Details>
                <div><dt>Due</dt><dd>Monday by 11:59pm</dd></div>
                <div><dt>Points</dt><dd>100</dd></div>
                <div><dt>Submitting</dt><dd>an external tool</dd></div>
                <div><dt>Available</dt><dd>after Dec 15, 2022 at 2:36pm</dd></div>
              </Details>
              <HomeworkFrame />
            </Main>
          </Columns>
        </Page>
        <Scrollbar parts={[0, 880, 8]} atStart />
      </Viewport>
      <WindowsTaskbar />
    </Screen>
  );
}
